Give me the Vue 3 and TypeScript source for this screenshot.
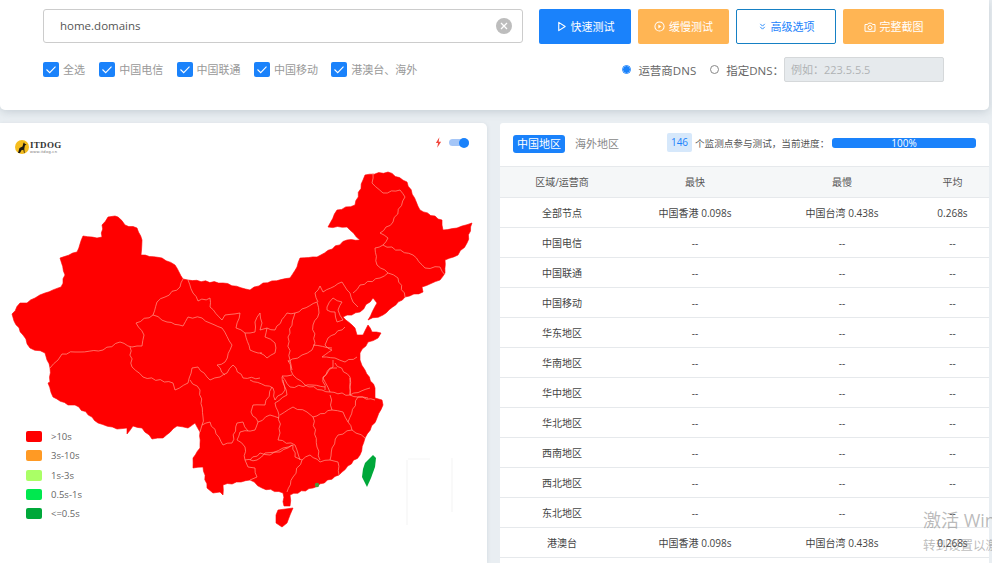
<script setup lang="ts">
const carriers = ['全选', '中国电信', '中国联通', '中国移动', '港澳台、海外']

const legend = [
  { label: '>10s', color: '#ff0000' },
  { label: '3s-10s', color: '#ff9a24' },
  { label: '1s-3s', color: '#aaff66' },
  { label: '0.5s-1s', color: '#00e84f' },
  { label: '<=0.5s', color: '#00a83a' },
]

const emptyRegions = [
  '中国电信', '中国联通', '中国移动', '华东地区', '华南地区',
  '华中地区', '华北地区', '西南地区', '西北地区', '东北地区',
]

const rows = [
  { name: '全部节点', fast: '中国香港 0.098s', slow: '中国台湾 0.438s', avg: '0.268s' },
  ...emptyRegions.map((name) => ({ name, fast: '--', slow: '--', avg: '--' })),
  { name: '港澳台', fast: '中国香港 0.098s', slow: '中国台湾 0.438s', avg: '0.268s' },
]

// the traced lines are coarse, so break long segments up to get a natural wiggle
function roughen(line: string, amp: number): string {
  const nums = line.match(/[\d.]+/g)!.map(Number)
  const closed = line.endsWith('Z')
  const pts: number[][] = []
  for (let i = 0; i < nums.length; i += 2) pts.push([nums[i], nums[i + 1]])
  if (closed) pts.push(pts[0])
  let out = `M${pts[0][0]},${pts[0][1]}`
  for (let i = 1; i < pts.length; i++) {
    const [x0, y0] = pts[i - 1]
    const [x1, y1] = pts[i]
    const len = Math.hypot(x1 - x0, y1 - y0)
    const steps = Math.floor(len / 4)
    for (let s = 1; s < steps; s++) {
      const t = s / steps
      const wave = Math.sin((x0 + y1) * 12.9 + s * 78.2) * amp
      const px = x0 + (x1 - x0) * t + (-(y1 - y0) / len) * wave
      const py = y0 + (y1 - y0) * t + ((x1 - x0) / len) * wave
      out += ` ${px.toFixed(1)},${py.toFixed(1)}`
    }
    out += ` ${x1},${y1}`
  }
  return closed ? out + 'Z' : out
}

const outline = roughen(
  'M115,216 118,217 125,225 137,228 142,240 141,255 162,258 175,265 183,279 188,280 223,283 250,290 263,283 290,278 297,267 300,258 317,257 347,240 360,240 347,227 328,227 337,210 355,205 363,180 365,175 388,172 407,182 420,210 442,220 443,230 457,228 472,223 467,243 458,255 445,260 445,273 440,280 422,287 423,292 405,297 383,315 368,320 377,303 373,298 360,312 343,317 355,328 357,335 363,335 368,325 372,332 381,333 378,338 368,342 360,353 360,360 365,370 375,388 375,398 382,400 383,405 377,418 365,438 360,455 339,475 313,488 290,495 290,506 284,506 283,493 262,488 250,480 223,485 223,495 220,492 213,493 207,488 203,467 193,468 193,458 200,448 200,432 195,423 188,428 177,426 163,438 152,439 142,428 133,426 127,434 127,428 117,429 98,423 92,417 75,405 68,405 53,397 48,383 50,382 50,368 47,360 45,353 30,348 23,335 14,321 12,314 20,303 27,303 35,298 45,293 61,287 65,275 60,258 77,252 83,236 97,238 102,237 102,225 108,217Z',
  0.7,
)

// province borders, traced in page coordinates
const borders = [
  'M183,279 180,287 165,297 157,302 153,315 136,323 144,335 142,346 132,347 120,342 103,350 80,352 75,352 62,354 58,360 50,368',
  'M153,315 167,322 183,326 188,317 202,318 210,323 222,328 232,345 225,362 217,365 225,375',
  'M188,280 193,293 198,301 210,298 210,307 222,320 225,315 240,313 236,328 245,333 250,350 258,353 262,353',
  'M245,333 255,332 255,322 260,313 262,323 260,330 267,328 265,337 275,343 275,353 267,358 260,353',
  'M267,328 275,330 287,313 295,313 288,337 290,360 292,370',
  'M295,313 317,302 319,313 313,325 315,343 312,350 302,355 288,362',
  'M318,302 315,293 320,286 323,292 342,282 347,290 350,293 353,302 358,307',
  'M353,293 360,285 380,278 388,273 377,265 375,248 383,245 388,238 380,233 393,222 405,197 400,190 383,193 372,183 373,173',
  'M383,245 413,255 425,268 440,267 445,275',
  'M388,273 398,278 405,297',
  'M327,307 333,298 342,302 338,310 343,320 337,322 335,312 327,310Z',
  'M345,327 328,338 325,345 332,350 322,357 335,358 345,362 357,357',
  'M313,345 332,348',
  'M333,360 333,367 323,377 325,390',
  'M335,363 350,377 350,388 350,395',
  'M292,375 282,376 290,387 312,385 325,387',
  'M288,360 293,375 305,385 322,390 330,392 323,378 330,368 337,368',
  'M330,395 332,410 313,417 307,412 293,407 280,415',
  'M282,377 285,390 275,400 273,388 250,380',
  'M283,380 287,395 275,403 279,415 280,433 278,440 295,445 300,460',
  'M272,387 265,405 253,405 251,412 258,422 270,415 279,418',
  'M258,422 255,430 240,432 237,440 245,447 245,460 257,460 265,453 280,452 292,445',
  'M202,425 210,422 223,445 232,443 237,423 243,422 248,431',
  'M190,380 200,390 203,417 202,425 200,432',
  'M130,347 132,367 143,377 173,383 175,390 188,383 192,368 198,367 210,380 220,377 227,373 233,365 243,378 260,378',
  'M245,460 248,467 255,468 257,477 250,480',
  'M302,460 293,477 287,492',
  'M250,460 260,453 270,455 283,448 293,445 295,457 302,460 310,455 320,462 330,460 338,462 339,475',
  'M313,417 317,447 320,460',
  'M332,410 343,412 348,422 352,430 338,435 332,448 330,460',
  'M352,430 365,438',
  'M348,422 358,397 375,400',
  'M330,392 350,395 358,397 368,398',
  'M350,378 350,395 370,388',
].map((d) => roughen(d, 0.9))
</script>

<template>
  <div class="page">
    <section class="panel">
      <div class="search-row">
        <div class="domain-input">
          <span>home.domains</span>
          <svg class="clear" viewBox="0 0 16 16" width="16" height="16">
            <circle cx="8" cy="8" r="8" fill="#bdbdbd" />
            <path d="M5 5l6 6M11 5l-6 6" stroke="#fff" stroke-width="1.3" fill="none" />
          </svg>
        </div>
        <div class="actions">
          <button class="btn primary">
            <svg viewBox="0 0 12 12" width="11" height="11"><path d="M3 1.5l7 4.5-7 4.5z" fill="none" stroke="currentColor" stroke-width="1.2" stroke-linejoin="round" /></svg>
            <span>快速测试</span>
          </button>
          <button class="btn warn">
            <svg viewBox="0 0 12 12" width="11" height="11"><circle cx="6" cy="6" r="5" fill="none" stroke="currentColor" stroke-width="1.1" /><path d="M4.8 3.8l3 2.2-3 2.2z" fill="currentColor" /></svg>
            <span>缓慢测试</span>
          </button>
          <button class="btn outline">
            <svg viewBox="0 0 12 12" width="9" height="9"><path d="M3 2.5l3 3 3-3M3 6.5l3 3 3-3" fill="none" stroke="currentColor" stroke-width="1.2" /></svg>
            <span>高级选项</span>
          </button>
          <button class="btn warn wide">
            <svg viewBox="0 0 12 12" width="12" height="12"><path d="M1 3.5h2.5l1-1.3h3l1 1.3H11v6.8H1z" fill="none" stroke="currentColor" stroke-width="1" stroke-linejoin="round" /><circle cx="6" cy="6.6" r="2" fill="none" stroke="currentColor" stroke-width="1" /></svg>
            <span>完整截图</span>
          </button>
        </div>
      </div>

      <div class="option-row">
        <div class="carriers">
          <label v-for="item in carriers" :key="item" class="check">
            <span class="box">
              <svg viewBox="0 0 16 15" width="16" height="15"><path d="M3.5 7.5l3.2 3.2 5.8-6" fill="none" stroke="#fff" stroke-width="1.1" /></svg>
            </span>
            {{ item }}
          </label>
        </div>
        <div class="dns">
          <label class="radio"><span class="dot on"></span>运营商DNS</label>
          <label class="radio"><span class="dot"></span>指定DNS&#xFF1A;</label>
          <div class="dns-input">例如&#xFF1A;223.5.5.5</div>
        </div>
      </div>
    </section>

    <main class="content">
      <section class="map-card">
        <svg class="map" viewBox="0 123 487 440" width="487" height="440">
          <path fill="#ff0000" stroke="#ff0000" stroke-width="0.6" stroke-linejoin="round" :d="outline" />
          <path fill="#ff0000" stroke="#ff0000" stroke-width="0.6" stroke-linejoin="round" d="M278,510 293,508 290,515 287,523 282,527 276,523 276,515Z" />
          <path v-for="(d, i) in borders" :key="i" :d="d" fill="none" stroke="#ff9c8c" stroke-width="0.7" />
          <path fill="#00a83a" d="M373,455 376,458 375,467 371,478 367,487 362,477 363,469 365,463Z" />
          <circle cx="317" cy="485" r="2.2" fill="#4a9a3c" />
          <path d="M407,525V460M452,458V512M408,459h22" fill="none" stroke="#f6f6f6" stroke-width="1.2" />
        </svg>

        <header class="map-head">
          <div class="logo">
            <svg viewBox="0 0 14 14" width="14" height="14">
              <circle cx="7" cy="7" r="7" fill="#f5bd1f" />
              <path d="M3 13l1.5-5 3-1.5.8-3 .7-1.2.7 1.4 1.8.9-1.6.8-.6 3.4.3 4.2H9l-.6-3.3-2 .6L5 13z" fill="#1d1a14" />
            </svg>
            <div class="logo-text">
              <strong>ITDOG</strong>
              <small>www.itdog.cn</small>
            </div>
          </div>
          <div class="switch-wrap">
            <svg viewBox="0 0 8 12" width="7" height="11"><path d="M5 0L1 6.5h2.5L2.5 12 7 5H4.2z" fill="#f0463c" /></svg>
            <span class="switch"><i></i></span>
          </div>
        </header>

        <ul class="legend">
          <li v-for="item in legend" :key="item.label">
            <i :style="{ background: item.color }"></i>{{ item.label }}
          </li>
        </ul>
      </section>

      <section class="table-card">
        <div class="table-top">
          <span class="tab active">中国地区</span>
          <span class="tab">海外地区</span>
          <div class="progress-info">
            <span class="count">146</span>
            <span class="note">个监测点参与测试&#xFF0C;当前进度&#xFF1A;</span>
            <div class="bar">100%</div>
          </div>
        </div>
        <div class="row head">
          <div>区域/运营商</div>
          <div>最快</div>
          <div>最慢</div>
          <div>平均</div>
        </div>
        <div v-for="row in rows" :key="row.name" class="row">
          <div>{{ row.name }}</div>
          <div>{{ row.fast }}</div>
          <div>{{ row.slow }}</div>
          <div>{{ row.avg }}</div>
        </div>
      </section>
    </main>

    <div class="watermark">
      <p>激活 Windows</p>
      <span>转到设置以激活 Windows。</span>
    </div>
  </div>
</template>

<style scoped>
.page {
  position: relative;
  width: 992px;
  height: 563px;
  overflow: hidden;
  background: #e9eef2;
  font-family: "Open Sans", "Noto Sans CJK SC", sans-serif;
}

.panel {
  width: 989px;
  height: 110px;
  box-sizing: border-box;
  padding: 9px 45px 0 43px;
  background: #fff;
  border-radius: 0 0 5px 5px;
  box-shadow: 0 2px 8px rgba(120, 135, 150, 0.3);
  position: relative;
  z-index: 1;
}

.search-row {
  display: flex;
  gap: 16px;
}

.domain-input {
  width: 480px;
  height: 34px;
  box-sizing: border-box;
  border: 1px solid #ccc;
  border-radius: 3px;
  display: flex;
  align-items: center;
  justify-content: space-between;
  padding: 0 10px 2px 16px;
  font-size: 11.5px;
  color: #555;
}

.domain-input .clear {
  margin-top: 2px;
}

.actions {
  display: flex;
  gap: 7px;
}

.btn {
  width: 92px;
  height: 35px;
  box-sizing: border-box;
  border: 1px solid transparent;
  border-radius: 2px;
  display: flex;
  align-items: center;
  justify-content: center;
  gap: 4px;
  padding: 0;
  font: inherit;
  font-size: 11px;
}

.btn span {
  margin-top: -2px;
}

.btn.primary {
  background: #1a82fb;
  color: #fff;
}

.btn.warn {
  width: 91px;
  background: #ffb554;
  color: #fff;
}

.btn.wide {
  width: 101px;
}

.btn.outline {
  width: 100px;
  background: #fff;
  border-color: #1680c4;
  color: #1a82fb;
}

.option-row {
  display: flex;
  justify-content: space-between;
  margin-top: 13px;
}

.carriers {
  display: flex;
  gap: 13.3px;
  padding-top: 4px;
}

.check {
  display: flex;
  align-items: center;
  gap: 4px;
  height: 16px;
  font-size: 11px;
  color: #999;
}

.check:first-child {
  margin-right: 1px;
}

.box {
  width: 16px;
  height: 15px;
  background: #1a82fb;
  border-radius: 2px;
  display: block;
}

.box svg {
  display: block;
}

.dns {
  display: flex;
  align-items: center;
  font-size: 11.5px;
  color: #666;
}

.radio {
  display: flex;
  align-items: center;
  gap: 7px;
  margin-right: 14px;
  white-space: nowrap;
}

.radio:nth-child(2) {
  margin-right: 0;
}

.dot {
  width: 9px;
  height: 9px;
  box-sizing: border-box;
  border: 1px solid #888;
  border-radius: 50%;
}

.dot.on {
  border-color: #1a82fb;
  background: radial-gradient(circle, #1a82fb 0 3px, #fff 3.5px);
}

.dns-input {
  flex: none;
  width: 160px;
  height: 25px;
  box-sizing: border-box;
  padding-left: 6px;
  line-height: 24px;
  font-size: 11px;
  background: #e6eaed;
  border: 1px solid #d5d8da;
  border-radius: 2px;
  color: #b0b3b5;
}

.content {
  display: flex;
  gap: 13px;
  width: 989px;
  margin-top: 13px;
}

.map-card {
  position: relative;
  width: 487px;
  height: 440px;
  flex: none;
  background: #fff;
  border-radius: 0 5px 0 0;
  box-shadow: 0 1px 4px rgba(120, 135, 150, 0.2);
}

.map {
  position: absolute;
  top: 0;
  left: 0;
}

.map-head {
  position: relative;
  display: flex;
  justify-content: space-between;
  align-items: center;
  padding: 17px 18px 0 15px;
}

.logo {
  display: flex;
  align-items: center;
  gap: 1px;
}

.logo svg {
  display: block;
}

.logo-text {
  display: flex;
  flex-direction: column;
  font-family: "Liberation Serif", serif;
  color: #333;
  line-height: 1;
}

.logo-text strong {
  font-size: 9px;
  letter-spacing: 0.3px;
}

.logo-text small {
  font-size: 4px;
  font-family: "Liberation Sans", sans-serif;
  letter-spacing: 0.3px;
  color: #777;
}

.switch-wrap {
  display: flex;
  align-items: center;
  gap: 7px;
  margin-top: -9px;
}

.switch {
  position: relative;
  width: 20px;
  height: 7px;
  background: #a5c6f7;
  border-radius: 4px;
}

.switch i {
  position: absolute;
  right: 0;
  top: -1.5px;
  width: 10px;
  height: 10px;
  background: #1a82fb;
  border-radius: 50%;
}

.legend {
  position: absolute;
  left: 26px;
  top: 304px;
  margin: 0;
  padding: 0;
  list-style: none;
  font-size: 9.5px;
  color: #666;
}

.legend li {
  display: flex;
  align-items: center;
  gap: 9px;
  height: 19.3px;
}

.legend i {
  width: 16px;
  height: 11px;
  border-radius: 2px;
}

.table-card {
  flex: 1;
  height: 440px;
  overflow: hidden;
  background: #fff;
  border-radius: 3px 3px 0 0;
}

.table-top {
  display: flex;
  align-items: center;
  height: 43px;
  padding: 0 13px;
  font-size: 11px;
  color: #888;
}

.tab {
  flex: none;
  white-space: nowrap;
  padding: 0 4px;
  margin-right: 2px;
  line-height: 18px;
  margin-top: -1px;
  border-radius: 3px;
}

.tab.active {
  background: #1a82fb;
  color: #fff;
  margin-right: 6px;
}

.progress-info {
  display: flex;
  align-items: center;
  margin-left: 42px;
  margin-top: -4px;
  color: #555;
}

.count {
  width: 25px;
  line-height: 19px;
  margin-right: 3px;
  text-align: center;
  font-size: 10px;
  color: #1a82fb;
  background: #d6e8fb;
  border-radius: 2px;
}

.note {
  width: 137px;
  font-size: 9.6px;
  white-space: nowrap;
}

.bar {
  width: 144px;
  height: 10px;
  line-height: 10px;
  font-size: 10px;
  text-align: center;
  color: #fff;
  background: #1a82fb;
  border-radius: 3px;
}

.row {
  display: grid;
  grid-template-columns: 124px 142px 152px 69px;
  align-items: center;
  height: 30px;
  box-sizing: border-box;
  border-bottom: 1px solid #e6e9ec;
  text-align: center;
  font-size: 10px;
  color: #444;
}

.row.head {
  height: 32px;
  padding-bottom: 2px;
  background: #f5f7f8;
  border-top: 1px solid #e6e9ec;
  color: #555;
}

.watermark {
  position: absolute;
  left: 923px;
  top: 507px;
  white-space: nowrap;
  color: rgba(120, 120, 120, 0.5);
  pointer-events: none;
}

.watermark p {
  margin: 0;
  font-size: 18px;
  line-height: 26px;
}

.watermark span {
  font-size: 12.5px;
  line-height: 22px;
}
</style>

<style>
html,
body {
  overflow: hidden;
}
</style>
